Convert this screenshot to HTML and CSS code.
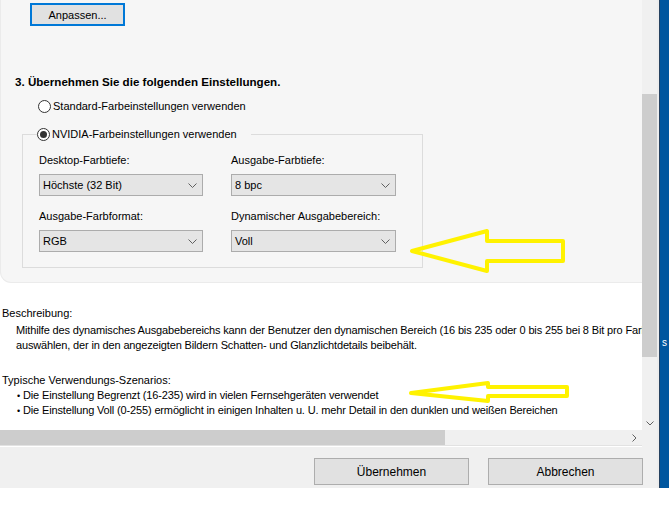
FILE: index.html
```html
<!DOCTYPE html>
<html>
<head>
<meta charset="utf-8">
<link rel="stylesheet" href="styles.css">
</head>
<body>
<div class="frame">
  <div class="main">
    <div class="scroller">
      <div class="view">
        <div class="content">
          <div class="panel">
            <button class="btn focused">Anpassen...</button>
            <div class="step">3. Übernehmen Sie die folgenden Einstellungen.</div>
            <label class="radio first"><span class="dot"></span>Standard-Farbeinstellungen verwenden</label>
            <fieldset class="group">
              <legend><label class="radio"><span class="dot on"></span>NVIDIA-Farbeinstellungen verwenden</label></legend>
              <div class="fields">
                <div class="field">
                  <div class="lbl">Desktop-Farbtiefe:</div>
                  <div class="combo">Höchste (32 Bit)<svg width="9" height="5"><polyline points="0.5,0.5 4.5,4.5 8.5,0.5"/></svg></div>
                </div>
                <div class="field">
                  <div class="lbl">Ausgabe-Farbtiefe:</div>
                  <div class="combo">8 bpc<svg width="9" height="5"><polyline points="0.5,0.5 4.5,4.5 8.5,0.5"/></svg></div>
                </div>
                <div class="field">
                  <div class="lbl">Ausgabe-Farbformat:</div>
                  <div class="combo">RGB<svg width="9" height="5"><polyline points="0.5,0.5 4.5,4.5 8.5,0.5"/></svg></div>
                </div>
                <div class="field">
                  <div class="lbl">Dynamischer Ausgabebereich:</div>
                  <div class="combo">Voll<svg width="9" height="5"><polyline points="0.5,0.5 4.5,4.5 8.5,0.5"/></svg></div>
                </div>
              </div>
            </fieldset>
          </div>
          <div class="info">
            <div class="title">Beschreibung:</div>
            <div class="desc">
              <div>Mithilfe des dynamisches Ausgabebereichs kann der Benutzer den dynamischen Bereich (16 bis 235 oder 0 bis 255 bei 8 Bit pro Farbkomponente)</div>
              <div>auswählen, der in den angezeigten Bildern Schatten- und Glanzlichtdetails beibehält.</div>
            </div>
            <div class="title second">Typische Verwendungs-Szenarios:</div>
            <ul class="bullets">
              <li>Die Einstellung Begrenzt (16-235) wird in vielen Fernsehgeräten verwendet</li>
              <li>Die Einstellung Voll (0-255) ermöglicht in einigen Inhalten u. U. mehr Detail in den dunklen und weißen Bereichen</li>
            </ul>
          </div>
        </div>
        <div class="hbar">
          <div class="hthumb"></div>
          <div class="harrow"><svg width="5" height="8"><polyline points="0.5,0.5 4,4 0.5,7.5"/></svg></div>
        </div>
      </div>
      <div class="vbar">
        <div class="vtrack"><div class="vthumb"></div></div>
        <div class="varrow"><svg width="8" height="5"><polyline points="0.5,0.5 4,4 7.5,0.5"/></svg></div>
        <div class="corner"></div>
      </div>
    </div>
    <div class="actions">
      <button class="btn wide">Übernehmen</button>
      <button class="btn wide">Abbrechen</button>
    </div>
  </div>
  <div class="sep"></div>
  <div class="edge"><span class="edge-char">s</span></div>
</div>

<svg class="marks" width="669" height="506">
  <polygon points="412,251 487,231 487,241 563,241 563,261 487,261 487,271"/>
  <polygon points="411,393 488,383 488,387 567,387 567,396 488,396 488,401"/>
</svg>
</body>
</html>
```

FILE: styles.css
```css
body {
  margin: 0;
  padding: 0;
  width: 669px;
  height: 506px;
  overflow: hidden;
  background: #fff;
  font-family: "Liberation Sans", Arial, sans-serif;
  font-size: 11px;
  color: #000;
  position: relative;
}

.frame {
  display: flex;
  height: 488px;
}

.main {
  width: 657px;
  display: flex;
  flex-direction: column;
}

.scroller {
  height: 447px;
  display: flex;
}

.view {
  width: 642px;
  display: flex;
  flex-direction: column;
}

.content {
  height: 431px;
  overflow: hidden;
  background: #fff;
}

/* top settings panel */
.panel {
  height: 283px;
  box-sizing: border-box;
  background: #f6f6f6;
  border-bottom: 1px solid #ebebeb;
  border-left: 1px solid #ebebeb;
  border-bottom-left-radius: 11px;
  padding-top: 3px;
}

.btn {
  font-family: "Liberation Sans", Arial, sans-serif;
  font-size: 11px;
  color: #000;
  background: #e1e1e1;
  border: 1px solid #adadad;
  margin: 0;
  padding: 0;
}

.btn.focused {
  display: block;
  margin-left: 29px;
  width: 95px;
  height: 23px;
  border: 2px solid #0078d7;
}

.step {
  font-weight: bold;
  font-size: 11.6px;
  line-height: 14px;
  margin: 49px 0 0 14px;
}

.radio {
  display: flex;
  align-items: center;
  line-height: 14px;
  white-space: nowrap;
}

.radio.first {
  margin: 10px 0 0 37px;
}

.dot {
  width: 11px;
  height: 11px;
  border: 1px solid #333;
  border-radius: 50%;
  background: #fff;
  margin-right: 2px;
  display: flex;
  align-items: center;
  justify-content: center;
}

.dot.on::after {
  content: "";
  width: 7px;
  height: 7px;
  border-radius: 50%;
  background: #333;
}

.group {
  margin: 14px 0 0 21px;
  width: 401px;
  box-sizing: border-box;
  border: 1px solid #dcdcdc;
  padding: 0 26px 15px 16px;
}

.group legend {
  padding: 0 14px 0 0;
  margin-left: -2px;
}

.fields {
  display: grid;
  grid-template-columns: 164px 165px;
  column-gap: 28px;
  row-gap: 13px;
  margin-top: 12px;
}

.lbl {
  line-height: 14px;
  margin-bottom: 7px;
  white-space: nowrap;
}

.combo {
  height: 22px;
  box-sizing: border-box;
  background: #e5e5e5;
  border: 1px solid #acacac;
  display: flex;
  align-items: center;
  justify-content: space-between;
  padding: 0 5px 0 3px;
}

.combo svg,
.harrow svg,
.varrow svg {
  fill: none;
  stroke: #606060;
  stroke-width: 1;
}

/* description */
.info {
  padding: 23px 0 0 2px;
  line-height: 15px;
}

.title.second {
  margin-top: 20px;
}

.desc {
  padding: 2px 0 0 14px;
  white-space: nowrap;
  letter-spacing: -0.15px;
}

.bullets {
  list-style: none;
  margin: 0;
  padding: 0 0 0 15px;
  line-height: 14px;
  white-space: nowrap;
  letter-spacing: -0.15px;
}

.bullets li::before {
  content: "\2022";
  display: inline-block;
  width: 6px;
  font-size: 9px;
}

/* scrollbars */
.hbar {
  height: 15px;
  margin-bottom: 1px;
  background: #f0f0f0;
  display: flex;
  justify-content: space-between;
  border-bottom: 1px solid #e2e2e2;
}

.hthumb {
  width: 445px;
  background: #cdcdcd;
}

.harrow {
  width: 15px;
  display: flex;
  align-items: center;
  justify-content: center;
}

.vbar {
  width: 15px;
  display: flex;
  flex-direction: column;
  background: #f0f0f0;
}

.vtrack {
  height: 415px;
  padding-top: 94px;
  box-sizing: border-box;
}

.vthumb {
  height: 263px;
  background: #cdcdcd;
}

.varrow {
  height: 16px;
  display: flex;
  align-items: center;
  justify-content: center;
}

.corner {
  flex: 1;
}

/* dialog buttons */
.actions {
  flex: 1;
  background: #f0f0f0;
  display: flex;
  justify-content: flex-end;
  align-items: flex-start;
  gap: 19px;
  padding: 11px 14px 0 0;
}

.btn.wide {
  width: 155px;
  height: 27px;
  font-size: 12px;
}

.sep {
  width: 2px;
  background: #ececec;
  border-right: 1px solid #24405f;
}

.edge {
  flex: 1;
  background: #00579f;
  color: #fff;
  font-size: 10px;
  padding: 337px 0 0 2px;
  overflow: hidden;
}

.marks {
  position: absolute;
  left: 0;
  top: 0;
}

.marks polygon {
  fill: none;
  stroke: #fff200;
  stroke-width: 4;
  stroke-linejoin: round;
}
```
